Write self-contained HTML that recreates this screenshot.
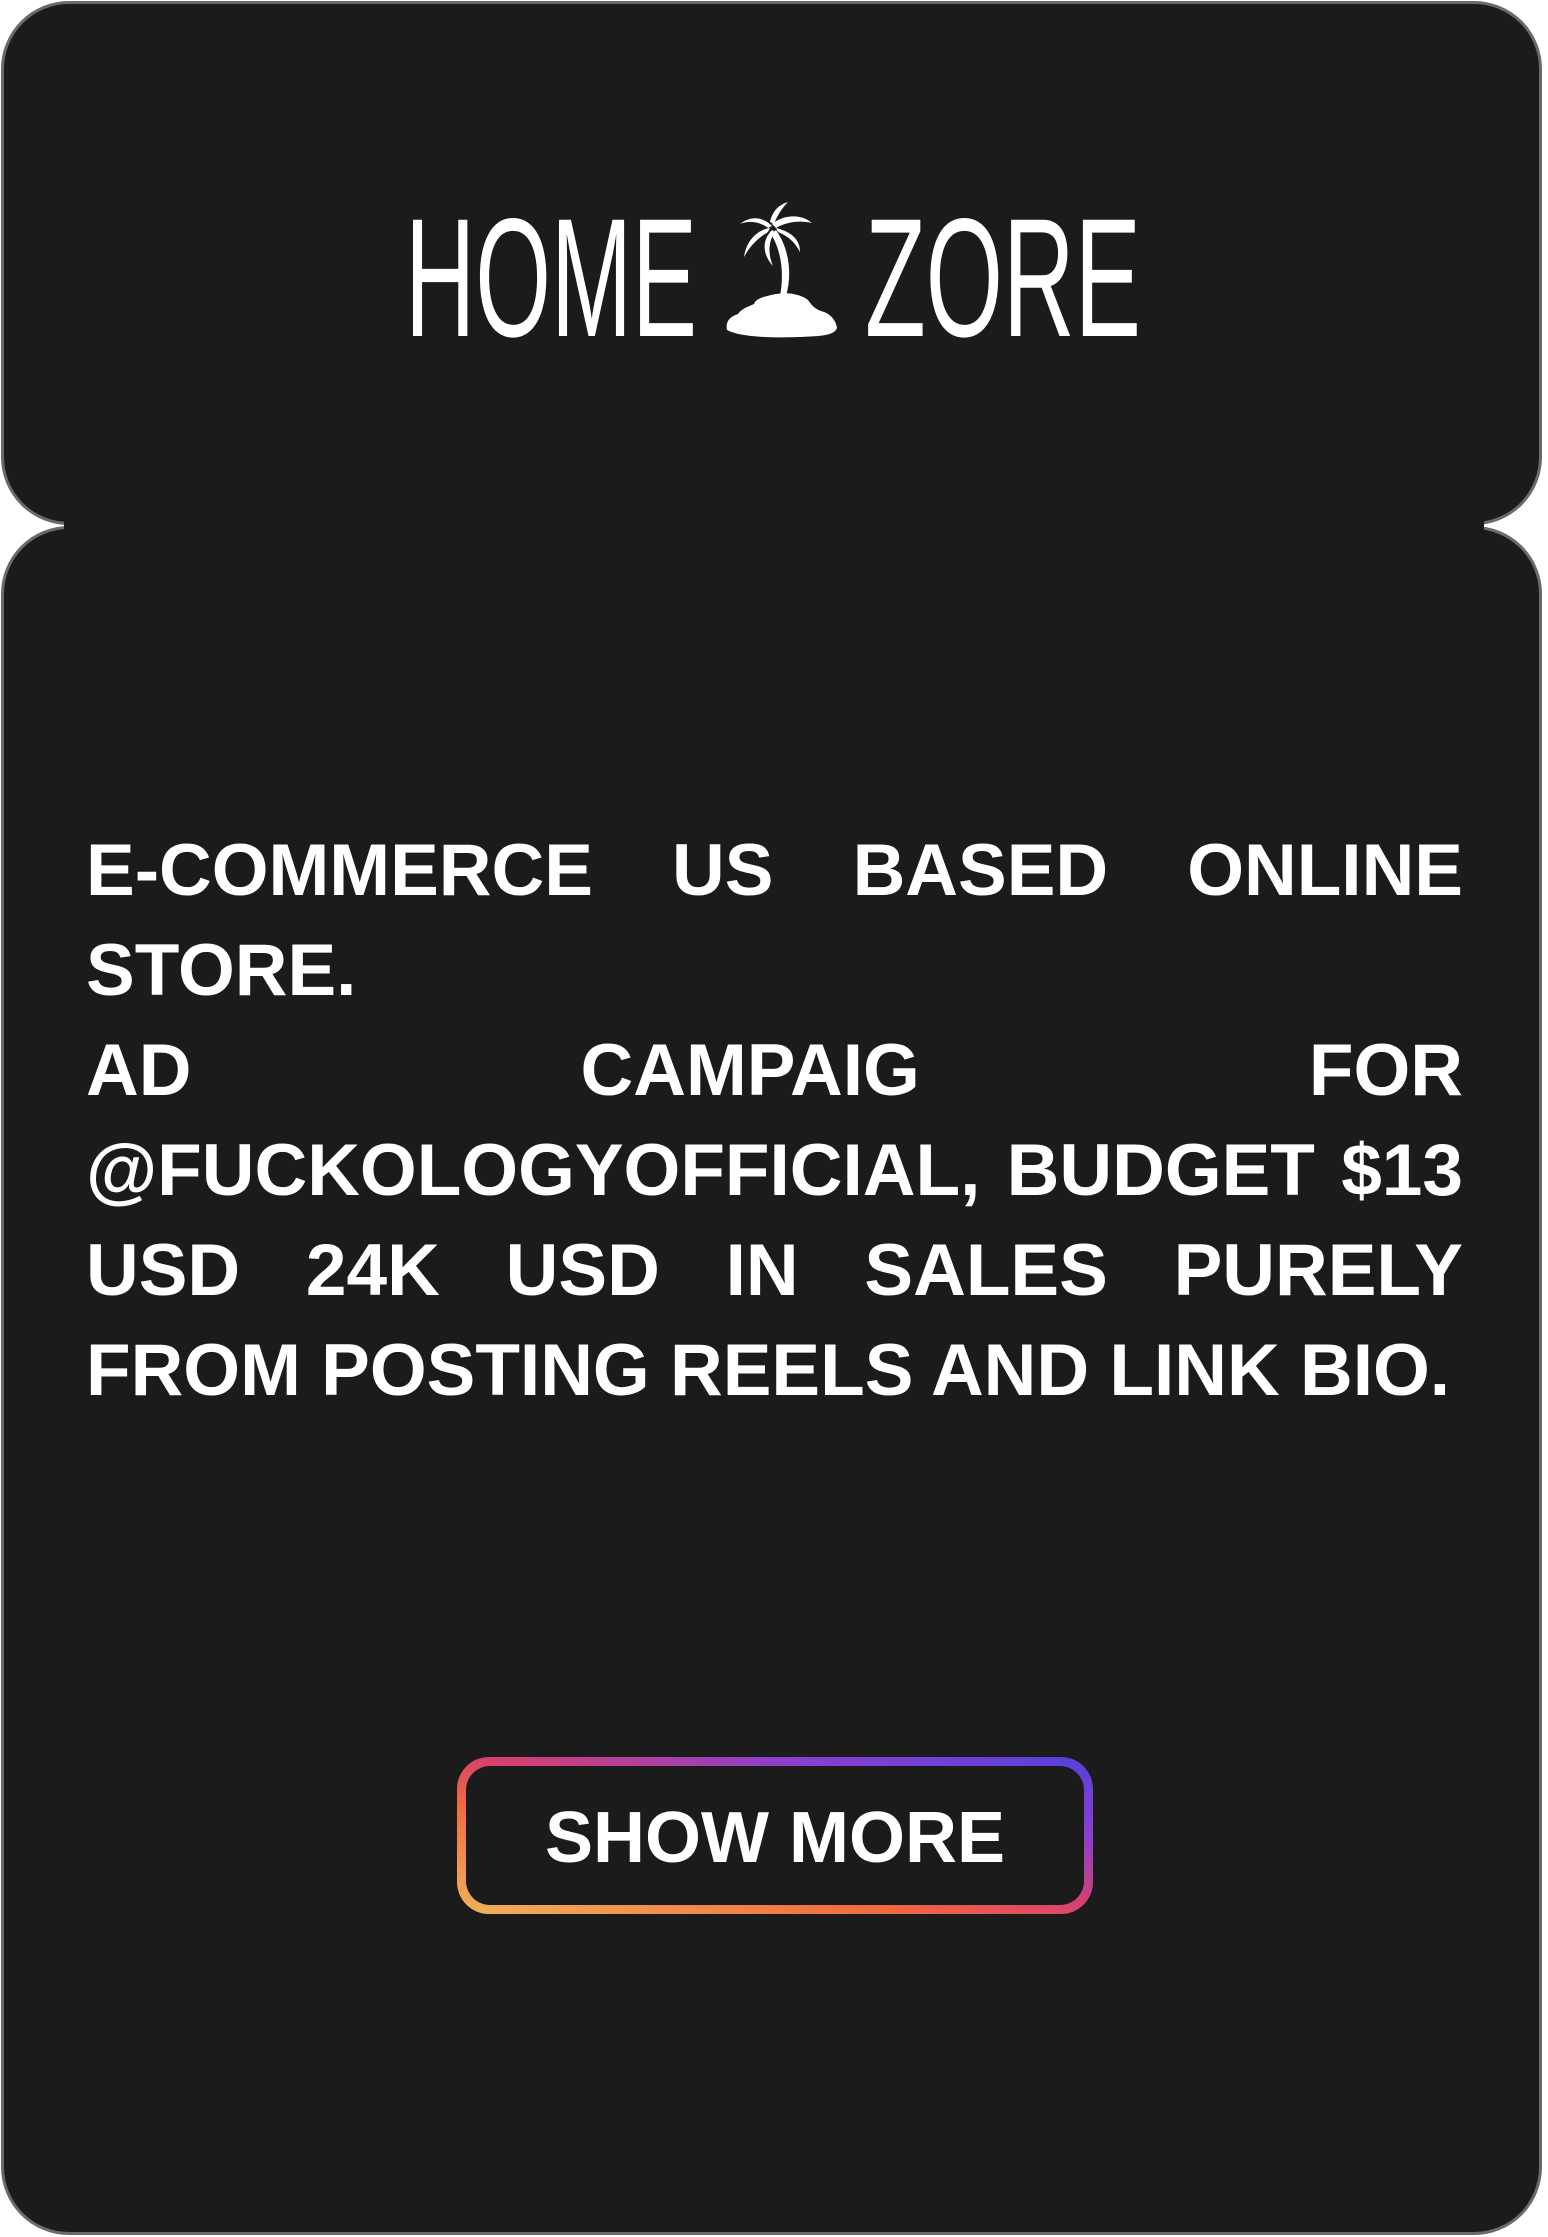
<!DOCTYPE html>
<html><head><meta charset="utf-8"><style>
html,body{margin:0;padding:0;background:#fff;}
body{width:1548px;height:2237px;position:relative;overflow:hidden;font-family:"Liberation Sans",sans-serif;}
.box{position:absolute;left:1px;width:1541px;background:#1b1b1b;border:3px solid #6a6a6a;border-radius:68px;box-sizing:border-box;}
#top{top:1px;height:524px;}
#bot{top:526px;height:1709px;}
#fill{position:absolute;left:64px;width:1420px;top:505px;height:40px;background:#1b1b1b;}
#txt{position:absolute;left:86px;width:1377px;top:821px;color:#fff;font-weight:bold;font-size:73px;line-height:100px;text-align:justify;margin:0;}
#btn{position:absolute;left:457px;top:1757px;width:636px;height:157px;border-radius:32px;padding:9px;box-sizing:border-box;
background:linear-gradient(to top right,#f0b45a 0%,#f06a40 35%,#d6406f 52%,#8a3fd0 75%,#5540dc 100%);}
#btn div{width:100%;height:100%;background:#1b1b1b;border-radius:24px;display:flex;align-items:center;justify-content:center;color:#fff;font-weight:bold;font-size:72px;padding-top:4px;box-sizing:border-box;}
</style></head><body>
<div class="box" id="top"></div>
<div class="box" id="bot"></div>
<div id="fill"></div>
<svg style="position:absolute;left:0;top:0" width="1548" height="520">
<g fill="#fff" font-family="Liberation Sans, sans-serif" font-size="100">
<text transform="translate(405,336) scale(1,1.69)" textLength="292" lengthAdjust="spacingAndGlyphs">HOME</text>
<text transform="translate(865,336) scale(1,1.69)" textLength="276" lengthAdjust="spacingAndGlyphs">ZORE</text>
</g>
<g transform="translate(700,190)" fill="#fff">
<path d="M27 140 C25 130 32 126 38 124 C42 118 50 116 54 114 C56 108 66 106 76 104 C88 102 100 104 108 110 C112 116 116 120 124 122 C130 124 136 130 137 138 C134 146 120 146 100 147 C70 148 40 147 27 140Z"/>
<path d="M86 106 C92 85 90 60 76 40 L71 44 C82 62 84 85 80 106Z"/>
<path d="M70 32 C72 22 78 15 88 12 C82 18 77 26 74 34Z"/>
<path d="M72 36 C62 26 50 26 40 34 C50 30 60 32 68 38Z"/>
<path d="M72 34 C84 24 102 24 112 33 C100 30 86 32 76 38Z"/>
<path d="M70 38 C56 40 46 52 44 67 C50 56 58 48 68 42Z"/>
<path d="M72 40 C62 50 62 64 73 76 C68 64 68 52 75 42Z"/>
<path d="M76 38 C92 42 100 50 100 62 C96 54 90 47 78 42Z"/>
</g>
</svg>
<p id="txt">E-COMMERCE US BASED ONLINE STORE.<br>AD CAMPAIG FOR @FUCKOLOGYOFFICIAL, BUDGET $13 USD 24K USD IN SALES PURELY FROM POSTING REELS AND LINK BIO.</p>
<div id="btn"><div>SHOW MORE</div></div>
</body></html>
